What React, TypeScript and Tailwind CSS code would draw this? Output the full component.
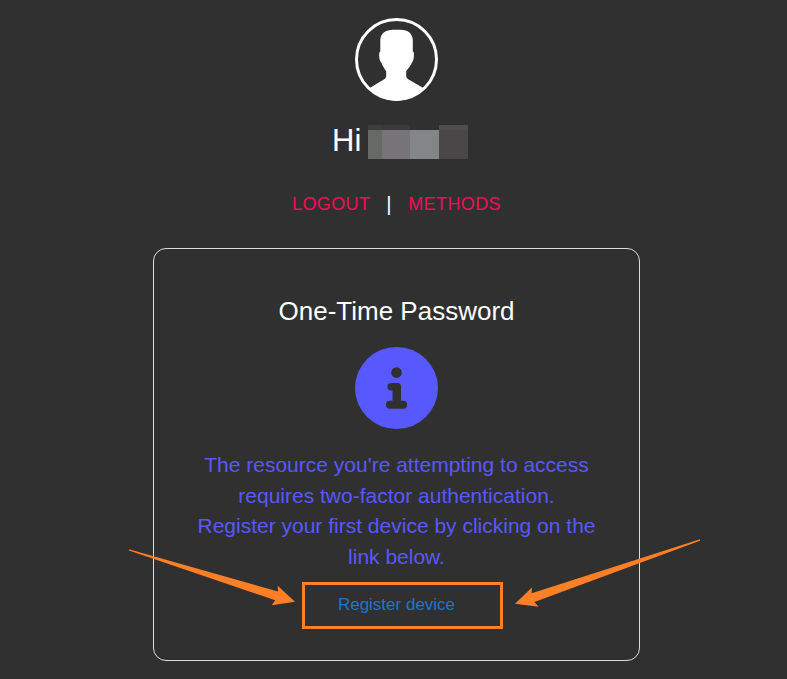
function Avatar() {
  return (
    <svg className="block h-[83px] w-[83px] shrink-0" viewBox="0 0 83 83" fill="none">
      <circle cx="41.5" cy="41.5" r="40" stroke="#fff" strokeWidth="3" />
      <path
        fill="#fff"
        d="M14.3 70.2L28 62C30.5 60.6 31.2 59.8 31.2 57.5V53.2C29 50.2 27 46.5 26.3 44.7C24.4 42.7 24 39 24.2 35.7C24.3 34.3 24.7 33.8 25.3 33.5V22.5C25.3 15.5 30.5 11.8 38 11.8H45.5C53 11.8 57.8 15.7 57.8 22.5V33.5C58.5 33.8 58.9 34.3 58.9 35.7C59.1 39 58.6 42.7 56.9 44.7C56 46.5 54 50 51.2 53V57.5C51.2 59.8 52 60.6 54.5 62L68.7 70.2C60 79 52 82.5 41.5 82.5S23 79 14.3 70.2Z"
      />
    </svg>
  );
}

function InfoBadge() {
  return (
    <svg className="block h-[83px] w-[83px] shrink-0" viewBox="0 0 83 83">
      <ellipse cx="41.5" cy="41" rx="41.5" ry="41" fill="#5858ff" />
      <circle cx="41.5" cy="25.6" r="5.3" fill="#303030" />
      <path
        d="M36.2 36H42.4C44.9 36 46 37.3 46 39.5V53.8H48.2A3.9 3.9 0 0 1 48.2 61.7H34.9A3.9 3.9 0 0 1 34.9 53.8H37.5V43.4H36.2A3.7 3.7 0 0 1 36.2 36Z"
        fill="#303030"
      />
    </svg>
  );
}

function HiddenName() {
  return (
    <div className="flex h-[34px] w-[100px]">
      <div className="w-[14px] border-t-[5px] border-[#3d3d3d] bg-[#666964]" />
      <div className="w-[28px] border-t-[5px] border-[#3a3a3a] bg-[#777478]" />
      <div className="w-[29px] border-t-[5px] border-[#303030] bg-[#838586]" />
      <div className="w-[29px] border-t-[5px] border-[#4e4e4e] bg-[#494748]" />
    </div>
  );
}

export default function App() {
  return (
    <main className="relative flex h-[679px] w-[787px] flex-col items-center overflow-hidden bg-[#303030] pt-[18px] pl-[6px] font-['Liberation_Sans',Arial,sans-serif] text-white">
      <Avatar />
      <div className="mt-6 flex w-[129px] shrink-0 whitespace-nowrap">
        <h1 className="w-9 shrink-0 text-[31px] leading-[32px]">Hi</h1>
        <HiddenName />
      </div>
      <nav className="mt-[33px] flex h-6 w-[209px] shrink-0 items-center whitespace-nowrap text-[18px] leading-6">
        <a className="w-[95px] tracking-[0.4px] text-[#f50c56]">LOGOUT</a>
        <span className="w-[22px] text-[20.57px]">|</span>
        <a className="tracking-[0.4px] text-[#f50c56]">METHODS</a>
      </nav>
      <section className="mt-8 flex h-[413px] w-[487px] shrink-0 flex-col items-center rounded-[13px] border border-[#dcdcdc] pt-[47px]">
        <h2 className="h-[30px] whitespace-nowrap text-[26px] leading-[30px]">One-Time Password</h2>
        <div className="mt-[21px]">
          <InfoBadge />
        </div>
        <p className="mt-[20px] whitespace-nowrap text-center text-[21px] leading-[30.7px] text-[#5858ff]">
          The resource you're attempting to access
          <br />
          requires two-factor authentication.
          <br />
          Register your first device by clicking on the
          <br />
          link below.
        </p>
        <a className="mt-[20px] text-[17px] leading-[24px] text-[#1976d2]">
          Register device
        </a>
      </section>
      <svg className="absolute top-0 left-0 h-[679px] w-[787px]" viewBox="0 0 787 679">
        <rect x="303.5" y="583.5" width="198" height="44" fill="none" stroke="#ff7f27" strokeWidth="3" />
        <path
          fill="#ff7f27"
          d="M129 549.2L278 591.5L277.7 585.8L295 601.8L271.7 605.2L275.2 600.2L129 550.5Z"
        />
        <path
          fill="#ff7f27"
          d="M700 539.3L531.7 593.3L531.9 587.5L515 603.8L538.6 606.8L534.4 602L700 540.7Z"
        />
      </svg>
    </main>
  );
}
